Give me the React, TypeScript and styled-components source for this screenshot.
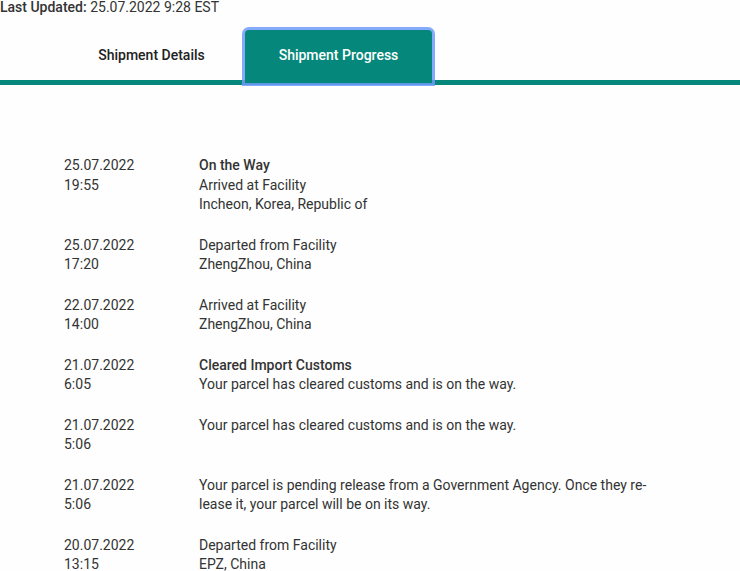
import styled, { createGlobalStyle } from "styled-components";

type TabProps = { $active?: boolean };

type ProgressEvent = {
  date: string;
  time: string;
  title?: string;
  lines: string[];
};

const events: ProgressEvent[] = [
  {
    date: "25.07.2022",
    time: "19:55",
    title: "On the Way",
    lines: ["Arrived at Facility", "Incheon, Korea, Republic of"],
  },
  {
    date: "25.07.2022",
    time: "17:20",
    lines: ["Departed from Facility", "ZhengZhou, China"],
  },
  {
    date: "22.07.2022",
    time: "14:00",
    lines: ["Arrived at Facility", "ZhengZhou, China"],
  },
  {
    date: "21.07.2022",
    time: "6:05",
    title: "Cleared Import Customs",
    lines: ["Your parcel has cleared customs and is on the way."],
  },
  {
    date: "21.07.2022",
    time: "5:06",
    lines: ["Your parcel has cleared customs and is on the way."],
  },
  {
    date: "21.07.2022",
    time: "5:06",
    lines: [
      "Your parcel is pending release from a Government Agency. Once they re\u00ADlease it, your parcel will be on its way.",
    ],
  },
  {
    date: "20.07.2022",
    time: "13:15",
    lines: ["Departed from Facility", "EPZ, China"],
  },
];

const GlobalStyle = createGlobalStyle`
  html, body {
    margin: 0;
    padding: 0;
    background: #fdfefd;
  }
  body {
    font-family: Roboto, "Liberation Sans", Arial, sans-serif;
    color: #333333;
    font-size: 14px;
  }
`;

const Page = styled.div`
  width: 740px;
  height: 571px;
  overflow: hidden;
`;

const Updated = styled.div`
  line-height: 14px;
  color: #333333;
`;

const UpdatedLabel = styled.span`
  font-weight: 500;
`;

const TabBar = styled.div`
  display: flex;
  height: 50px;
  margin-top: 16px;
  padding-left: 58px;
  border-bottom: 5px solid #06877b;
`;

const Tab = styled.button<TabProps>`
  flex: 0 0 187px;
  height: ${(p) => (p.$active ? "53px" : "50px")};
  padding: 0 0 ${(p) => (p.$active ? "3px" : "0")};
  border: none;
  border-radius: 4px 4px 0 0;
  font-family: Roboto, "Liberation Sans", Arial, sans-serif;
  font-size: 14px;
  font-weight: 500;
  cursor: pointer;
  background: ${(p) => (p.$active ? "#06877b" : "transparent")};
  color: ${(p) => (p.$active ? "#ffffff" : "#222222")};
  box-shadow: ${(p) =>
    p.$active ? "0 0 0 3px rgba(110, 155, 250, 0.85)" : "none"};
  position: relative;
  z-index: 1;
`;

const Timeline = styled.div`
  display: flex;
  flex-direction: column;
  gap: 21px;
  padding: 71px 0 0 64px;
`;

const Row = styled.div`
  display: grid;
  grid-template-columns: 135px 455px;
  line-height: 19.5px;
`;

const Stamp = styled.div`
  display: flex;
  flex-direction: column;
`;

const Details = styled.div`
  display: flex;
  flex-direction: column;
`;

const Title = styled.div`
  font-weight: 500;
`;

export default function App() {
  return (
    <Page>
      <GlobalStyle />
      <Updated>
        <UpdatedLabel>Last Updated:</UpdatedLabel> 25.07.2022 9:28 EST
      </Updated>
      <TabBar>
        <Tab>Shipment Details</Tab>
        <Tab $active>Shipment Progress</Tab>
      </TabBar>
      <Timeline>
        {events.map((ev, i) => (
          <Row key={i}>
            <Stamp>
              <span>{ev.date}</span>
              <span>{ev.time}</span>
            </Stamp>
            <Details>
              {ev.title && <Title>{ev.title}</Title>}
              {ev.lines.map((line, j) => (
                <span key={j}>{line}</span>
              ))}
            </Details>
          </Row>
        ))}
      </Timeline>
    </Page>
  );
}
